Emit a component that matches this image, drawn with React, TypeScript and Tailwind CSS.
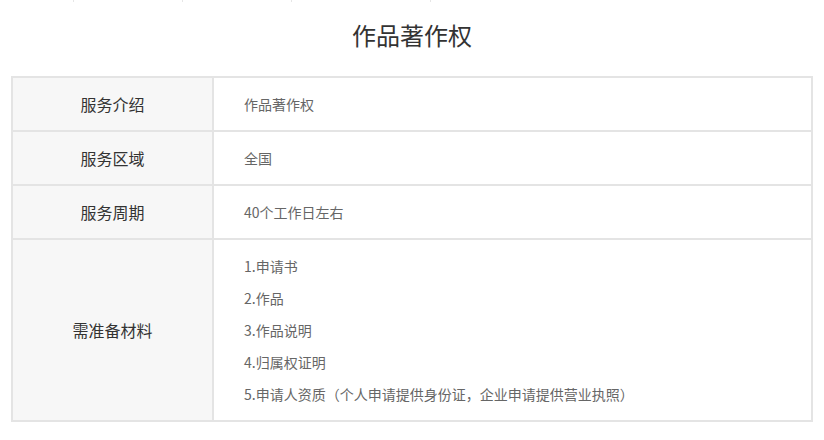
const rows = [
  { label: "服务介绍", value: ["作品著作权"] },
  { label: "服务区域", value: ["全国"] },
  { label: "服务周期", value: ["40个工作日左右"] },
  {
    label: "需准备材料",
    value: [
      "1.申请书",
      "2.作品",
      "3.作品说明",
      "4.归属权证明",
      "5.申请人资质（个人申请提供身份证，企业申请提供营业执照）",
    ],
  },
];

const App = () => {
  return (
    <div
      className="w-[824px] h-[440px] bg-white overflow-hidden"
      style={{ fontFamily: '"Microsoft YaHei", "Noto Sans CJK SC", "Noto Sans", sans-serif' }}
    >
      {/* leftover tab separators from the section above */}
      <div className="flex h-[2px]">
        <div className="w-[74px] border-r border-[#e6e6e6]" />
        <div className="w-[109px] border-r border-[#e6e6e6]" />
        <div className="w-[109px] border-r border-[#e6e6e6]" />
        <div className="w-[139px] border-r border-[#e6e6e6]" />
      </div>

      <h2 className="text-center text-[24px] leading-[32px] text-[#333] mt-[17px] mb-[25px]">作品著作权</h2>

      <div className="px-[11px]">
        <table className="w-full border-collapse border-2 border-[#e4e4e4]">
          <tbody>
            {rows.map((row) => (
              <tr key={row.label}>
                <td className="w-[201px] border-2 border-[#e4e4e4] bg-[#f7f7f7] text-center text-[16px] text-[#333]">
                  {row.label}
                </td>
                <td
                  className={
                    row.value.length > 1
                      ? "border-2 border-[#e4e4e4] pl-[30px] py-[10px] text-[14px] leading-[32px] text-[#666]"
                      : "h-[54px] border-2 border-[#e4e4e4] pl-[30px] text-[14px] text-[#666]"
                  }
                >
                  {row.value.map((v) => (
                    <p key={v}>{v}</p>
                  ))}
                </td>
              </tr>
            ))}
          </tbody>
        </table>
      </div>
    </div>
  );
};

export default App;
